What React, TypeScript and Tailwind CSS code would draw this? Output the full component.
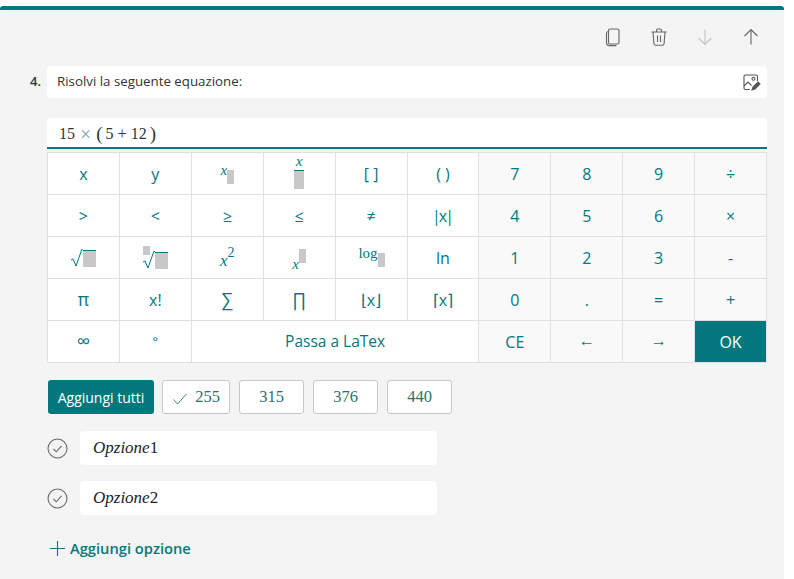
import type { ReactNode } from 'react'

const teal = 'text-[#03787c]'
const serif = 'font-["Liberation_Serif",serif]'

function Slot({ className }: { className: string }) {
  return <span className={`block bg-[#c8c8c8] ${className}`} />
}

function Sqrt({ small }: { small?: boolean }) {
  return (
    <span className="flex items-end">
      {small && <Slot className="w-[7px] h-[9px] -mr-[8px] mb-[14px] relative" />}
      <svg width="13" height="18" viewBox="0 0 13 18" fill="none" stroke="#03787c" strokeWidth="1">
        <path d="M1 11l2-1 3 7 6-17h1" />
      </svg>
      <Slot className="w-[13px] h-[17px] border-t border-[#03787c]" />
    </span>
  )
}

function Key({ children, className = '' }: { children: ReactNode; className?: string }) {
  return (
    <div className={`h-[42px] flex items-center justify-center border-r border-b border-[#e0e0e0] text-base ${teal} ${className}`}>
      {children}
    </div>
  )
}

const right = 'bg-[#f9f9f9]'

function Keypad() {
  return (
    <div className="ml-[47px] mt-[3px] w-[720px] grid grid-cols-10 border-l border-t border-[#e0e0e0] bg-white">
      <Key>x</Key>
      <Key>y</Key>
      <Key>
        <span className="flex items-start pt-[3px]">
          <span className={`${serif} italic text-[15px] leading-[16px] -mt-[4px]`}>x</span>
          <Slot className="w-[7px] h-[14px] mt-[4px]" />
        </span>
      </Key>
      <Key>
        <span className="flex flex-col items-center">
          <span className={`${serif} italic text-[15px] leading-[14px] -mt-[4px]`}>x</span>
          <Slot className="w-[10px] h-[19px] border-t border-[#03787c] mt-[2px]" />
        </span>
      </Key>
      <Key>[ ]</Key>
      <Key>( )</Key>
      <Key className={right}>7</Key>
      <Key className={right}>8</Key>
      <Key className={right}>9</Key>
      <Key className={right}>÷</Key>

      <Key>&gt;</Key>
      <Key>&lt;</Key>
      <Key>≥</Key>
      <Key>≤</Key>
      <Key>≠</Key>
      <Key><span className="tracking-[-2px] -ml-[2px]">|x|</span></Key>
      <Key className={right}>4</Key>
      <Key className={right}>5</Key>
      <Key className={right}>6</Key>
      <Key className={right}>×</Key>

      <Key><Sqrt /></Key>
      <Key><Sqrt small /></Key>
      <Key>
        <span className={`${serif} italic text-[17px] pt-[6px]`}>x<sup className="not-italic text-[14px] -top-[9px] relative align-baseline">2</sup></span>
      </Key>
      <Key>
        <span className="flex items-end">
          <span className={`${serif} italic text-[15px] leading-[16px] -mb-[6px]`}>x</span>
          <Slot className="w-[7px] h-[14px] mb-[3px]" />
        </span>
      </Key>
      <Key>
        <span className="flex items-start ml-[1px]">
          <span className={`${serif} text-[15px] leading-[16px] -mt-[3px]`}>log</span>
          <Slot className="w-[7px] h-[14px] mt-[5px]" />
        </span>
      </Key>
      <Key>ln</Key>
      <Key className={right}>1</Key>
      <Key className={right}>2</Key>
      <Key className={right}>3</Key>
      <Key className={right}>-</Key>

      <Key><span className="text-[18px]">π</span></Key>
      <Key>x!</Key>
      <Key><span className="text-[18px]">∑</span></Key>
      <Key><span className="text-[18px]">∏</span></Key>
      <Key>⌊x⌋</Key>
      <Key>⌈x⌉</Key>
      <Key className={right}>0</Key>
      <Key className={right}>.</Key>
      <Key className={right}>=</Key>
      <Key className={right}>+</Key>

      <Key><span className="text-[19px]">∞</span></Key>
      <Key><span className="text-[13px]">°</span></Key>
      <Key className="col-span-4"><span className="text-[15.5px]">Passa a LaTex</span></Key>
      <Key className={right}>CE</Key>
      <Key className={right}><span className="-mt-[3px]">←</span></Key>
      <Key className={right}><span className="-mt-[3px]">→</span></Key>
      <Key className="bg-[#03787c] !text-white">OK</Key>
    </div>
  )
}

function Chip({ children, w }: { children: ReactNode; w: string }) {
  return (
    <div className={`${w} h-[34px] flex items-center justify-center bg-white border border-[#c8c8c8] rounded-[3px] ${serif} text-[16.5px] text-[#2d6f73]`}>
      {children}
    </div>
  )
}

function Option({ label, n }: { label: string; n: string }) {
  return (
    <div className="flex items-center ml-[47px] h-[34px]">
      <svg width="21" height="21" viewBox="0 0 21 21" fill="none" stroke="#6a6a6a" strokeWidth="1.1">
        <circle cx="10.5" cy="10.5" r="9.5" />
        <path d="M6.5 11l2.8 2.8 5.2-6" />
      </svg>
      <div className={`ml-[12px] w-[357px] h-[34px] flex items-center pl-[13px] bg-white rounded-[4px] ${serif} text-[17px] text-[#222]`}>
        <i>{label}</i>{n}
      </div>
    </div>
  )
}

export default function App() {
  return (
    <div className='w-[794px] h-[579px] overflow-hidden bg-white pt-[6px] font-["Open_Sans",sans-serif]'>
      <div className="w-[784px] h-[573px] bg-[#f4f4f4] border-t-4 border-[#03787c] rounded-t-[3px]">
        <div className="h-[56px] flex items-center justify-end gap-[26px] pr-[23px] pb-[2px]">
          <svg width="20" height="20" viewBox="0 0 20 20" fill="none" stroke="#666" strokeWidth="1.1">
            <rect x="5.5" y="2" width="10.5" height="15" rx="1.5" />
            <path d="M5.5 4.2C4.2 4.4 3.5 5.2 3.5 6.4v9.400c0 1.800 1.200 2.800 2.800 2.800h7" />
          </svg>
          <svg width="20" height="20" viewBox="0 0 20 20" fill="none" stroke="#666" strokeWidth="1.1">
            <path d="M2.5 5h15M7.500 5V3.500c0-.8.600-1.500 1.500-1.500h2c.9 0 1.500.7 1.500 1.500V5M4 5l.9 11.500c.1 1 .9 1.800 1.900 1.800h6.400c1 0 1.800-.8 1.900-1.800L16 5M8.500 8.500v6.500M11.500 8.500v6.500" />
          </svg>
          <svg width="20" height="20" viewBox="0 0 20 20" fill="none" stroke="#c4c4c4" strokeWidth="1.1">
            <path d="M10 2.5v15M3.500 11l6.500 6.500 6.500-6.500" />
          </svg>
          <svg width="20" height="20" viewBox="0 0 20 20" fill="none" stroke="#666" strokeWidth="1.1">
            <path d="M10 17.5v-15M3.500 9L10 2.500 16.500 9" />
          </svg>
        </div>

        <div className="flex items-center h-[32px]">
          <span className="w-[47px] pr-[6px] text-right text-[13px] font-semibold text-[#333]">4.</span>
          <div className="w-[720px] h-[32px] flex items-center justify-between pl-[10px] pr-[6px] bg-white rounded-[4px] text-[13.3px] text-[#333]">
            <span>Risolvi la seguente equazione:</span>
            <svg width="20" height="20" viewBox="0 0 20 20" fill="none" stroke="#555" strokeWidth="1.1">
              <path d="M9 17.500H4.500a1.500 1.500 0 0 1-1.500-1.500V4.500A1.500 1.500 0 0 1 4.500 3h10.500a1.500 1.500 0 0 1 1.500 1.500V9" />
              <circle cx="12.500" cy="6.700" r="1.500" />
              <path d="M3 14l4-4 3.500 3.500" />
              <path d="M11 18l1-3 5-5 2 2-5 5z" fill="#555" />
            </svg>
          </div>
        </div>

        <div className={`ml-[47px] mt-[20px] w-[720px] h-[31px] flex items-center pl-[12px] pt-[2px] bg-white rounded-t-[4px] border-b-2 border-[#03787c] ${serif} text-[16px] text-[#333]`}>
          15<span className="mx-[5px] text-[20px] leading-none text-[#7f9fb5]">×</span><span className="text-[19px] leading-none">(</span><span className="mx-[3px] whitespace-pre">5 + 12</span><span className="text-[19px] leading-none">)</span>
        </div>

        <Keypad />

        <div className="flex items-center ml-[48px] mt-[17px]">
          <button className="w-[106px] h-[34px] bg-[#03787c] text-white text-[14px] rounded-[3px]">Aggiungi tutti</button>
          <div className="flex gap-[9px] ml-[8px]">
            <Chip w="w-[68px]">
              <svg width="16" height="12" viewBox="0 0 16 12" fill="none" stroke="#3f8a8d" strokeWidth="1" className="mr-[7px] mt-[3px]">
                <path d="M1.500 6.500l4 4.500 9-10" />
              </svg>
              255
            </Chip>
            <Chip w="w-[65px]">315</Chip>
            <Chip w="w-[65px]">376</Chip>
            <Chip w="w-[65px]">440</Chip>
          </div>
        </div>

        <div className="mt-[17px] flex flex-col gap-[16px]">
          <Option label="Opzione" n="1" />
          <Option label="Opzione" n="2" />
        </div>

        <div className={`flex items-center gap-[4px] ml-[49px] mt-[22px] ${teal}`}>
          <svg width="17" height="17" viewBox="0 0 17 17" fill="none" stroke="#03787c" strokeWidth="1.1">
            <path d="M8.500 1v15M1 8.500h15" />
          </svg>
          <span className="text-[14.7px] font-semibold">Aggiungi opzione</span>
        </div>
      </div>
    </div>
  )
}
